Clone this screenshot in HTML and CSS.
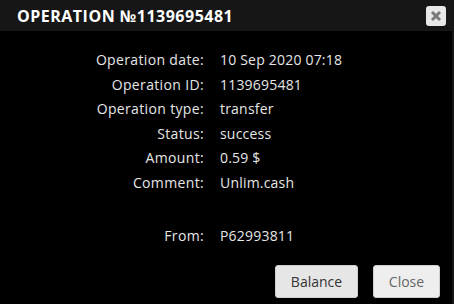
FILE: index.html
```html
<!DOCTYPE html>
<html>
<head>
<meta charset="utf-8">
<link rel="stylesheet" href="styles.css">
</head>
<body>
<div class="dialog">
  <div class="titlebar">
    <span class="title">OPERATION №1139695481</span>
    <button class="x-btn" aria-label="close">
      <svg width="12" height="12" viewBox="0 0 12 12"><path d="M2 2 L10 10 M10 2 L2 10" stroke="#7a7a7a" stroke-width="3" stroke-linecap="butt"/></svg>
    </button>
  </div>
  <div class="content">
    <div class="details">
      <div class="lbl">Operation date:</div><div class="val">10 Sep 2020 07:18</div>
      <div class="lbl">Operation ID:</div><div class="val">1139695481</div>
      <div class="lbl">Operation type:</div><div class="val">transfer</div>
      <div class="lbl">Status:</div><div class="val">success</div>
      <div class="lbl">Amount:</div><div class="val">0.59 $</div>
      <div class="lbl">Comment:</div><div class="val">Unlim.cash</div>
      <div class="lbl spacer"></div><div class="val spacer"></div>
      <div class="lbl">From:</div><div class="val">P62993811</div>
    </div>
  </div>
  <div class="buttons">
    <button class="btn">Balance</button>
    <button class="btn">Close</button>
  </div>
</div>
</body>
</html>
```
FILE: styles.css
```css
html, body {
  margin: 0;
  padding: 0;
  background: #000;
}
.dialog {
  width: 454px;
  height: 304px;
  background: #000;
  display: flex;
  flex-direction: column;
  font-family: "Open Sans", sans-serif;
  box-sizing: border-box;
  border-right: 2px solid #151515;
}
.titlebar {
  height: 31px;
  background: #161616;
  display: flex;
  align-items: center;
  justify-content: space-between;
  padding: 0 6px 0 17px;
  box-sizing: border-box;
}
.title {
  color: #fff;
  font-weight: 700;
  font-size: 16px;
  letter-spacing: 0.5px;
}
.x-btn {
  width: 20px;
  height: 20px;
  padding: 0;
  border: none;
  border-radius: 3px;
  background: #e8e8e8;
  display: flex;
  align-items: center;
  justify-content: center;
  margin-top: 1px;
}
.content {
  flex: 1;
  padding-top: 17px;
}
.details {
  display: grid;
  grid-template-columns: 204px auto;
  column-gap: 16px;
  row-gap: 0;
  color: #e6e6e6;
  font-size: 14px;
  line-height: 24.5px;
}
.lbl {
  text-align: right;
  letter-spacing: 0.35px;
}
.val {
  letter-spacing: 0.2px;
}
.spacer {
  height: 29px;
}
.buttons {
  display: flex;
  justify-content: flex-end;
  gap: 15px;
  padding: 0 12px 6px 0;
}
.btn {
  height: 33px;
  padding: 0 13px;
  font-family: "Open Sans", sans-serif;
  font-size: 14px;
  color: #333;
  background: #e6e6e6;
  border: 1px solid #cfcfcf;
  border-radius: 3px;
}
.btn:first-child {
  width: 83px;
}
.btn:last-child {
  width: 67px;
  color: #666;
  background: #eeeeee;
}
```
